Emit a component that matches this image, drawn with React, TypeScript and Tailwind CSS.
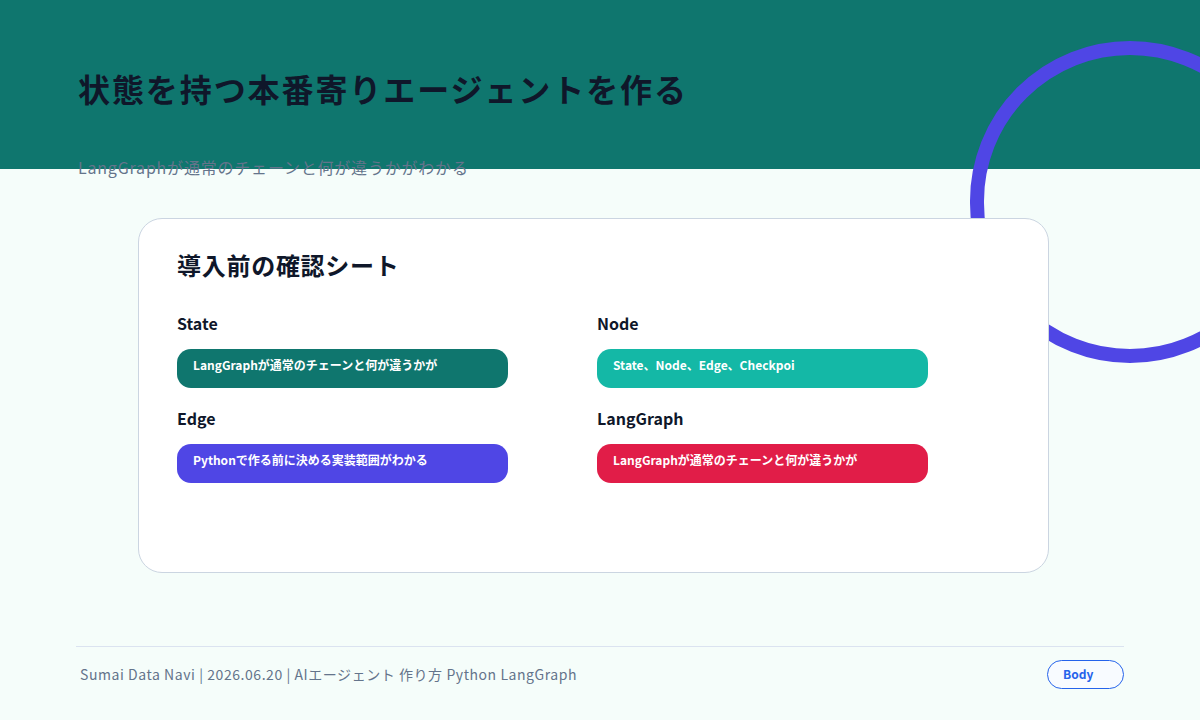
export default function App() {
  const font = { fontFamily: '"Noto Sans CJK JP", "Noto Sans", sans-serif' };
  const items = [
    { label: "State", text: "LangGraphが通常のチェーンと何が違うかが", bg: "bg-[#0f766e]" },
    { label: "Node", text: "State、Node、Edge、Checkpoi", bg: "bg-[#14b8a6]" },
    { label: "Edge", text: "Pythonで作る前に決める実装範囲がわかる", bg: "bg-[#4f46e5]" },
    { label: "LangGraph", text: "LangGraphが通常のチェーンと何が違うかが", bg: "bg-[#e11d48]" },
  ];
  return (
    <div style={font} className="relative w-[1200px] h-[720px] overflow-hidden bg-[#f5fdfa]">
      <div className="absolute left-0 top-0 w-full h-[169px] bg-[#0f766e]" />
      <div className="absolute left-[970px] top-[41px] w-[320px] h-[322px] rounded-full border-[14px] border-[#4f46e5]" />
      <div className="relative z-10 flex flex-col h-full">
        <div className="pl-[78px] pt-[64px]">
          <h1 className="text-[32px] leading-[48px] font-bold text-[#0f172a] tracking-[0.06em]">状態を持つ本番寄りエージェントを作る</h1>
          <p className="mt-[43px] text-[16px] leading-[24px] text-[#64748b] tracking-[0.05em]">LangGraphが通常のチェーンと何が違うかがわかる</p>
        </div>
        <div className="ml-[138px] mt-[39px] w-[911px] h-[355px] rounded-[24px] border border-[#cbd5e1] bg-white px-[38px] pt-[28px]">
          <h2 className="text-[24px] leading-[36px] font-bold text-[#0f172a] tracking-[0.03em]">導入前の確認シート</h2>
          <div className="mt-[28px] grid grid-cols-[420px_420px] gap-y-[18px]">
            {items.map((it) => (
              <div key={it.label}>
                <div className="text-[16px] leading-[24px] font-bold text-[#0f172a]">{it.label}</div>
                <div className={`mt-[14px] w-[331px] h-[39px] rounded-[14px] ${it.bg} pl-[16px] pt-[7px] text-[12px] leading-[18px] font-bold text-white`}>{it.text}</div>
              </div>
            ))}
          </div>
        </div>
        <div className="mx-[76px] mt-[73px] border-t border-[#dbe3f0]" />
        <div className="mx-[76px] mt-[13px] flex items-center justify-between">
          <span className="pl-[4px] text-[14px] text-[#64748b] tracking-[0.04em]">Sumai Data Navi | 2026.06.20 | AIエージェント 作り方 Python LangGraph</span>
          <span className="w-[77px] h-[29px] rounded-full border border-[#2563eb] bg-[#f8fbff] text-[12px] font-bold text-[#2563eb] pl-[15px] pt-[4px]">Body</span>
        </div>
      </div>
    </div>
  );
}
